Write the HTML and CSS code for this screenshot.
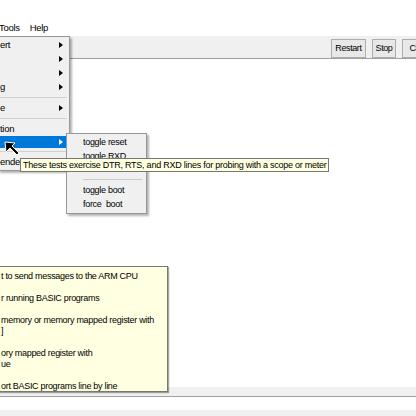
FILE: index.html
```html
<!DOCTYPE html>
<html>
<head>
<meta charset="utf-8">
<link rel="stylesheet" href="styles.css">
</head>
<body>
<div class="app">
  <div class="titlespace"></div>
  <div class="menubar">
    <span class="mb-item">Tools</span>
    <span class="mb-item">Help</span>
  </div>
  <div class="toolbar">
    <div class="spacer"></div>
    <button class="btn">Restart</button>
    <button class="btn">Stop</button>
    <button class="btn last">Clear</button>
  </div>
  <div class="main"></div>
  <div class="status1"></div>
  <div class="status2"></div>
  <div class="status3"></div>

  <div class="help">
    <p>t to send messages to the ARM CPU</p>
    <p>r running BASIC programs</p>
    <p>memory or memory mapped register with<br>]</p>
    <p>ory mapped register with<br>ue</p>
    <p>ort BASIC programs line by line</p>
  </div>

  <div class="menu">
    <div class="mi sub"><span>ert</span></div>
    <div class="mi sub"><span></span></div>
    <div class="mi sub"><span></span></div>
    <div class="mi sub"><span>g</span></div>
    <div class="sep"></div>
    <div class="mi sub"><span>e</span></div>
    <div class="sep"></div>
    <div class="mi"><span>tion</span></div>
    <div class="mi sub hl"><span></span></div>
    <div class="sep"></div>
    <div class="mi"><span>ended</span></div>
  </div>

  <div class="submenu">
    <div class="si">toggle reset</div>
    <div class="si">toggle RXD</div>
    <div class="ssep"></div>
    <div class="si">toggle boot</div>
    <div class="si">force&nbsp; boot</div>
  </div>

  <div class="tooltip">These tests exercise DTR, RTS, and RXD lines for probing with a scope or meter</div>

  <svg class="cursor" width="20" height="20" viewBox="0 0 20 20">
    <path d="M3 3 L13 4 L10 7 L17 14 L15 16 L8 9 L4 13 Z" fill="#000" stroke="#fff" stroke-width="1" stroke-linejoin="miter"/>
  </svg>
</div>
</body>
</html>
```
FILE: styles.css
```css
html, body {
  margin: 0;
  padding: 0;
}
body {
  width: 416px;
  height: 416px;
  overflow: hidden;
  background: #fff;
  font-family: "Liberation Sans", Arial, sans-serif;
  font-size: 9px;
  letter-spacing: -0.3px;
  color: #000;
}
.app {
  position: relative;
  width: 416px;
  height: 416px;
  display: flex;
  flex-direction: column;
  overflow: hidden;
}
.titlespace {
  height: 20px;
  background: #fff;
}
.menubar {
  height: 16px;
  display: flex;
  align-items: center;
  gap: 10px;
  background: #fff;
  font-size: 9.5px;
  margin-left: -1px;
}
.mb-item {
  line-height: 16px;
}
.toolbar {
  height: 22px;
  background: #f0f0f0;
  border-bottom: 1px solid #a0a0a0;
  display: flex;
  align-items: center;
  gap: 6px;
}
.spacer {
  flex: 1;
}
.btn {
  font: inherit;
  letter-spacing: -0.4px;
  font-size: 9px;
  height: 19px;
  padding: 0 3px;
  margin: 2px 0 0 0;
  background: #e8e8e8;
  border: 1px solid #adadad;
  border-radius: 0;
  color: #000;
}
.btn.last {
  padding-left: 6px;
  margin-right: -17px;
}
.main {
  flex: 1;
  background: #fff;
}
.status1 {
  height: 9px;
  background: #f0f0f0;
  border-bottom: 1px solid #a0a0a0;
}
.status2 {
  height: 13px;
  background: #fff;
}
.status3 {
  height: 6px;
  background: #f0f0f0;
}
.help {
  position: absolute;
  left: -2px;
  top: 266px;
  width: 170px;
  height: 126px;
  background: #ffffe1;
  border: 1px solid #7a7a6a;
  box-shadow: 1px 1px 1px rgba(0,0,0,0.35);
  padding: 4px 0 0 2px;
  box-sizing: border-box;
  line-height: 11px;
  font-size: 9px;
  white-space: nowrap;
}
.help p {
  margin: 0 0 11px 0;
}
.menu {
  position: absolute;
  left: -2px;
  top: 36px;
  width: 72px;
  background: #f0f0f0;
  border: 1px solid #979797;
  box-shadow: 2px 2px 2px rgba(0,0,0,0.3);
  padding: 1px 0 1px 0;
  box-sizing: border-box;
  font-size: 9.5px;
}
.mi {
  height: 14px;
  line-height: 14px;
  padding-left: 1px;
  position: relative;
  white-space: nowrap;
}
.mi.sub::after {
  content: "";
  position: absolute;
  right: 6px;
  top: 4px;
  border-left: 4px solid #000;
  border-top: 3.5px solid transparent;
  border-bottom: 3.5px solid transparent;
}
.mi.hl {
  background: #0078d7;
  color: #fff;
  height: 12px;
  margin: 0 2px 0 0;
}
.mi.hl::after {
  border-left-color: #fff;
  top: 3px;
  right: 4px;
}
.sep {
  height: 1px;
  background: #d0d0d0;
  margin: 3px 2px 3px 0;
}
.submenu {
  position: absolute;
  left: 66px;
  top: 133px;
  width: 81px;
  height: 81px;
  background: #f0f0f0;
  border: 1px solid #979797;
  box-shadow: 2px 2px 2px rgba(0,0,0,0.3);
  padding: 1px 0 0 0;
  box-sizing: border-box;
  font-size: 9px;
}
.si {
  height: 14px;
  line-height: 14px;
  padding-left: 16px;
  white-space: nowrap;
}
.ssep {
  height: 1px;
  background: #c8c8c8;
  margin: 16px 4px 3px 16px;
}
.tooltip {
  position: absolute;
  left: 20px;
  top: 158px;
  height: 14px;
  line-height: 12px;
  padding: 0 2px;
  box-sizing: border-box;
  background: #ffffe1;
  border: 1px solid #767676;
  white-space: nowrap;
  font-size: 9px;
  letter-spacing: -0.25px;
}
.cursor {
  position: absolute;
  left: 2px;
  top: 139px;
}
```
